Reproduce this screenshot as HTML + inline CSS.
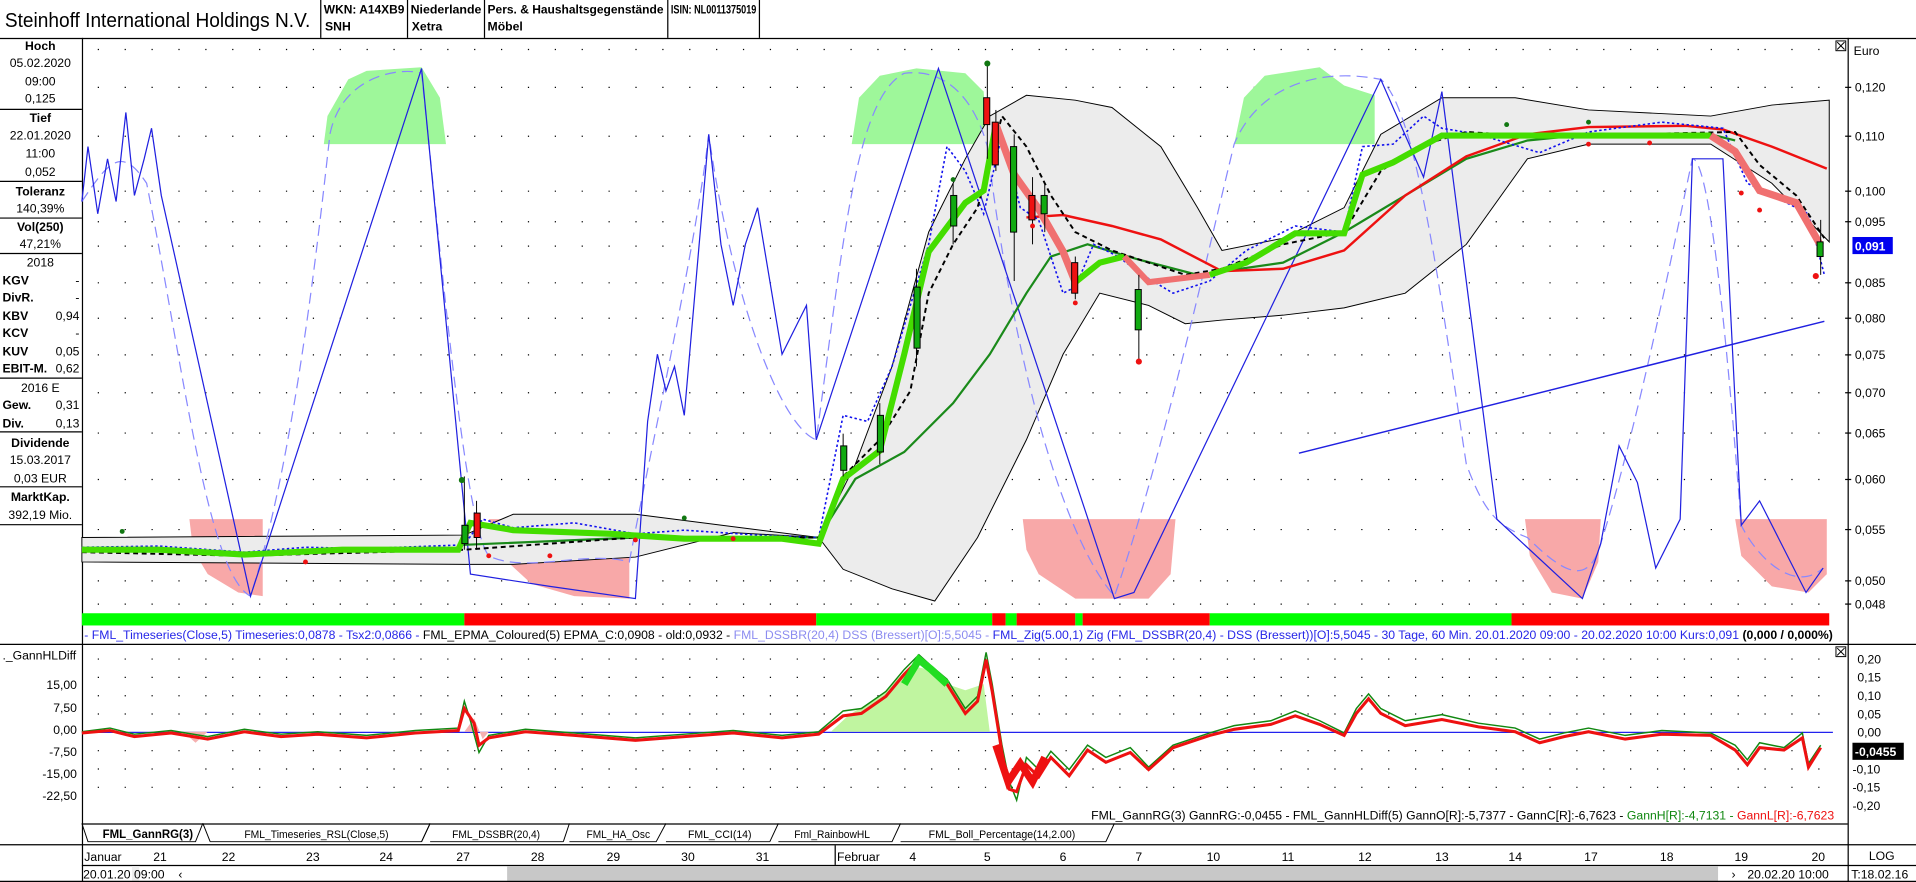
<!DOCTYPE html>
<html><head><meta charset="utf-8"><style>
html,body{margin:0;padding:0;background:#fff;overflow:hidden}
svg{display:block}
text{font-family:"Liberation Sans",Arial,sans-serif;font-size:10px;fill:#000}
.b{font-weight:bold}
.c{text-anchor:middle}
.r{text-anchor:end}
</style></head><body>
<svg width="1916" height="882" viewBox="0 0 1568 722" preserveAspectRatio="none" xmlns="http://www.w3.org/2000/svg">
<rect width="1568" height="722" fill="#fff"/>
<!-- header -->
<text x="4" y="22" style="font-size:16.5px" textLength="250" lengthAdjust="spacingAndGlyphs">Steinhoff International Holdings N.V.</text>
<g stroke="#000" stroke-width="1">
<line x1="262.5" y1="0" x2="262.5" y2="31"/><line x1="333.5" y1="0" x2="333.5" y2="31"/>
<line x1="396.5" y1="0" x2="396.5" y2="31"/><line x1="546.5" y1="0" x2="546.5" y2="31"/>
<line x1="621.5" y1="0" x2="621.5" y2="31"/>
<line x1="0" y1="31.5" x2="1568" y2="31.5"/>
<line x1="67.5" y1="31" x2="67.5" y2="722"/>
<line x1="1512.5" y1="31" x2="1512.5" y2="722"/>
</g>
<g class="b">
<text x="265" y="11" class="b" textLength="66" lengthAdjust="spacingAndGlyphs">WKN: A14XB9</text><text x="266" y="25" class="b">SNH</text>
<text x="336" y="11" class="b" textLength="58" lengthAdjust="spacingAndGlyphs">Niederlande</text><text x="337" y="25" class="b">Xetra</text>
<text x="399" y="11" class="b" textLength="144" lengthAdjust="spacingAndGlyphs">Pers. &amp; Haushaltsgegenstände</text><text x="399" y="25" class="b">Möbel</text>
<text x="549" y="11" class="b" textLength="70" lengthAdjust="spacingAndGlyphs">ISIN: NL0011375019</text>
</g>
<!-- sidebar -->
<g>
<text x="33" y="41" class="c b">Hoch</text><text x="33" y="55" class="c">05.02.2020</text><text x="33" y="70" class="c">09:00</text><text x="33" y="84" class="c">0,125</text>
<text x="33" y="100" class="c b">Tief</text><text x="33" y="114" class="c">22.01.2020</text><text x="33" y="129" class="c">11:00</text><text x="33" y="144" class="c">0,052</text>
<text x="33" y="160" class="c b">Toleranz</text><text x="33" y="174" class="c">140,39%</text>
<text x="33" y="189" class="c b">Vol(250)</text><text x="33" y="203" class="c">47,21%</text>
<text x="33" y="218" class="c">2018</text>
<text x="2" y="233" class="b">KGV</text><text x="65" y="233" class="r">-</text>
<text x="2" y="247" class="b">DivR.</text><text x="65" y="247" class="r">-</text>
<text x="2" y="262" class="b">KBV</text><text x="65" y="262" class="r">0,94</text>
<text x="2" y="276" class="b">KCV</text><text x="65" y="276" class="r">-</text>
<text x="2" y="291" class="b">KUV</text><text x="65" y="291" class="r">0,05</text>
<text x="2" y="305" class="b">EBIT-M.</text><text x="65" y="305" class="r">0,62</text>
<text x="33" y="321" class="c">2016 E</text>
<text x="2" y="335" class="b">Gew.</text><text x="65" y="335" class="r">0,31</text>
<text x="2" y="350" class="b">Div.</text><text x="65" y="350" class="r">0,13</text>
<text x="33" y="366" class="c b">Dividende</text><text x="33" y="380" class="c">15.03.2017</text><text x="33" y="395" class="c">0,03 EUR</text>
<text x="33" y="410" class="c b">MarktKap.</text><text x="33" y="425" class="c">392,19 Mio.</text>
<g stroke="#000"><line x1="0" y1="89.5" x2="67" y2="89.5"/><line x1="0" y1="148.5" x2="67" y2="148.5"/><line x1="0" y1="178.5" x2="67" y2="178.5"/><line x1="0" y1="207.5" x2="67" y2="207.5"/><line x1="0" y1="309.5" x2="67" y2="309.5"/><line x1="0" y1="353.5" x2="67" y2="353.5"/><line x1="0" y1="398.5" x2="67" y2="398.5"/><line x1="0" y1="429.5" x2="67" y2="429.5"/></g>
</g>
<!-- grid dots main -->
<g stroke="#000" stroke-width="1" stroke-dasharray="1 21">
<line x1="80" y1="40.5" x2="1500" y2="40.5"/><line x1="80" y1="71.5" x2="1500" y2="71.5"/><line x1="80" y1="111.5" x2="1500" y2="111.5"/>
<line x1="80" y1="156.5" x2="1500" y2="156.5"/><line x1="80" y1="181.5" x2="1500" y2="181.5"/><line x1="80" y1="201.5" x2="1500" y2="201.5"/>
<line x1="80" y1="231.5" x2="1500" y2="231.5"/><line x1="80" y1="260.5" x2="1500" y2="260.5"/><line x1="80" y1="290.5" x2="1500" y2="290.5"/>
<line x1="80" y1="321.5" x2="1500" y2="321.5"/><line x1="80" y1="354.5" x2="1500" y2="354.5"/><line x1="80" y1="392.5" x2="1500" y2="392.5"/>
<line x1="80" y1="433.5" x2="1500" y2="433.5"/><line x1="80" y1="475.5" x2="1500" y2="475.5"/><line x1="80" y1="494.5" x2="1500" y2="494.5"/>
<line x1="80" y1="539.5" x2="1500" y2="539.5"/><line x1="80" y1="554.5" x2="1500" y2="554.5"/><line x1="80" y1="569.5" x2="1500" y2="569.5"/>
<line x1="80" y1="584.5" x2="1500" y2="584.5"/><line x1="80" y1="614.5" x2="1500" y2="614.5"/><line x1="80" y1="629.5" x2="1500" y2="629.5"/><line x1="80" y1="644.5" x2="1500" y2="644.5"/>
</g>
<!-- green fills top -->
<g fill="#9ef79a">
<path d="M265,118 L268,95 L285,65 L300,58 L345,55 L360,80 L365,118Z"/>
<path d="M697,118 L703,80 L720,62 L750,56 L790,60 L805,75 L808,118Z"/>
<path d="M1010,118 L1018,80 L1035,62 L1080,55 L1100,70 L1125,78 L1125,118Z"/>
</g>
<!-- pink fills bottom -->
<g fill="#f8a8a8">
<path d="M155,425 L215,425 L215,488 L195,485 L170,470 L158,450Z"/>
<path d="M400,425 L515,425 L515,490 L470,488 L435,478 L410,455Z"/>
<path d="M837,425 L962,425 L958,470 L940,490 L880,490 L850,470 L840,450Z"/>
<path d="M1248,425 L1310,425 L1308,460 L1295,490 L1270,485 L1252,455Z"/>
<path d="M1420,425 L1495,425 L1495,470 L1480,485 L1450,480 L1425,455Z"/>
</g>
<!-- bollinger band -->
<path d="M67,440 L380,438 L420,421 L520,421 L670,440 L700,380 L730,300 L760,190 L790,130 L810,95 L840,78 L880,82 L910,88 L950,120 L980,170 L1000,205 L1050,195 L1100,170 L1130,110 L1180,80 L1240,80 L1300,90 L1400,95 L1450,86 L1497,82 L1497,198 L1450,150 L1400,118 L1300,118 L1250,130 L1200,200 L1150,240 L1100,252 L1050,258 L1000,262 L970,265 L940,250 L900,240 L870,290 L840,360 L800,440 L765,492 L730,482 L690,466 L670,440 L600,436 L520,456 L420,462 L380,462 L67,460Z" fill="#ececec" stroke="#000" stroke-width="0.8"/>
<!-- dashed light blue -->
<path d="M67,165 C90,130 100,120 120,150 C150,300 170,470 205,488 C240,380 260,200 270,110 C280,60 330,55 345,60 C360,200 380,430 400,455 C430,470 480,450 515,460 C530,380 570,200 580,110 C600,250 640,350 668,360 C690,200 700,80 740,60 C780,55 800,90 808,120 C830,300 870,440 912,488 C950,380 990,200 1010,118 C1030,70 1080,55 1130,65 C1160,90 1180,250 1200,380 C1215,420 1225,430 1250,440 C1280,470 1300,480 1310,445 C1340,350 1370,200 1385,130 C1400,130 1415,300 1425,430 C1440,460 1470,485 1492,465" fill="none" stroke="#8888ff" stroke-width="1" stroke-dasharray="9 5"/>
<!-- blue zigzag -->
<polyline points="67,165 72,120 80,175 88,130 95,165 103,92 110,160 118,130 124,105 132,160 205,488 345,56 385,470 450,480 520,490 530,345 538,290 545,320 552,300 560,340 580,110 590,200 600,250 610,200 620,170 640,290 660,250 668,360 768,56 912,490 928,485 1130,65 1165,145 1180,75 1225,425 1295,490 1310,445 1325,365 1340,395 1355,465 1375,425 1385,130 1395,130 1410,130 1425,430 1440,410 1478,485 1492,465" fill="none" stroke="#2020e0" stroke-width="1"/>
<line x1="1063" y1="371" x2="1493" y2="263" stroke="#2020e0" stroke-width="1.2"/>
<!-- green MA -->
<polyline points="380,446 520,440 670,440 700,392 740,370 780,330 810,290 840,240 860,210 890,200 930,212 980,225 1050,215 1100,190 1150,160 1200,130 1250,115 1300,110 1400,110 1420,115" fill="none" stroke="#1a8a1a" stroke-width="1.8"/>
<!-- red MA -->
<polyline points="840,178 870,176 910,185 950,196 1000,222 1050,220 1100,205 1150,160 1200,128 1250,110 1300,104 1380,103 1410,106 1450,120 1495,138" fill="none" stroke="#ee1111" stroke-width="2"/>
<!-- dotted blue -->
<polyline points="67,448 130,447 200,452 250,448 300,449 380,446 395,425 420,432 470,428 520,437 560,434 620,438 670,440 690,340 710,345 730,300 760,200 775,120 790,140 805,175 820,110 835,170 850,180 870,240 880,235 895,200 915,210 935,225 960,240 990,230 1020,205 1060,185 1100,190 1115,120 1140,118 1165,95 1180,105 1210,110 1260,125 1300,108 1360,100 1410,105 1430,150 1460,165 1480,175 1493,225" fill="none" stroke="#1010ee" stroke-width="1.3" stroke-dasharray="2 2"/>
<!-- black dashed -->
<polyline points="67,452 200,455 380,450 520,440 670,440 690,390 720,360 745,320 760,240 780,200 800,170 820,95 840,120 860,160 880,190 910,205 940,215 970,225 1000,220 1050,200 1100,190 1130,140 1160,120 1200,108 1260,112 1330,110 1420,108 1440,135 1470,160 1493,195" fill="none" stroke="#000" stroke-width="1.6" stroke-dasharray="4 3"/>
<!-- price band green/red -->
<polyline points="67,450 130,450 200,454 280,450 375,450 385,428 420,434 500,437 560,441 640,441 670,445 690,392 720,369 740,290 760,206 790,166 805,156 815,102" fill="none" stroke="#44dd00" stroke-width="5"/>
<polyline points="815,102 830,143 850,171 870,206 880,231" fill="none" stroke="#f07070" stroke-width="6"/>
<polyline points="880,231 900,215 920,210" fill="none" stroke="#44dd00" stroke-width="5"/>
<polyline points="920,210 940,231 990,225" fill="none" stroke="#f07070" stroke-width="5"/>
<polyline points="990,225 1020,215 1060,191 1100,191 1115,143 1140,133 1180,111 1240,111 1300,111 1400,111" fill="none" stroke="#44dd00" stroke-width="5"/>
<polyline points="1400,111 1420,124 1440,156 1470,166 1490,201" fill="none" stroke="#f07070" stroke-width="6"/>
<!-- candles -->
<g stroke="#000" stroke-width="0.8">
<line x1="808" y1="52" x2="808" y2="130"/><rect x="805" y="80" width="5" height="22" fill="#ee1111"/>
<line x1="815" y1="90" x2="815" y2="140"/><rect x="812" y="100" width="5" height="35" fill="#ee1111"/>
<line x1="830" y1="110" x2="830" y2="230"/><rect x="827" y="120" width="5" height="70" fill="#11aa11"/>
<line x1="845" y1="145" x2="845" y2="200"/><rect x="842" y="160" width="5" height="20" fill="#ee1111"/>
<line x1="855" y1="150" x2="855" y2="190"/><rect x="852" y="160" width="5" height="15" fill="#11aa11"/>
<line x1="880" y1="210" x2="880" y2="245"/><rect x="877" y="215" width="5" height="25" fill="#ee1111"/>
<line x1="932" y1="225" x2="932" y2="295"/><rect x="929" y="237" width="5" height="33" fill="#11aa11"/>
<line x1="1490" y1="180" x2="1490" y2="225"/><rect x="1487" y="198" width="5" height="12" fill="#11aa11"/>
<line x1="380" y1="390" x2="380" y2="450"/><rect x="378" y="430" width="5" height="15" fill="#11aa11"/>
<line x1="390" y1="410" x2="390" y2="450"/><rect x="388" y="420" width="5" height="20" fill="#ee1111"/>
<line x1="690" y1="355" x2="690" y2="390"/><rect x="688" y="365" width="5" height="20" fill="#11aa11"/>
<line x1="720" y1="330" x2="720" y2="380"/><rect x="718" y="340" width="5" height="30" fill="#11aa11"/>
<line x1="750" y1="220" x2="750" y2="300"/><rect x="748" y="235" width="5" height="50" fill="#11aa11"/>
<line x1="780" y1="150" x2="780" y2="200"/><rect x="778" y="160" width="5" height="25" fill="#11aa11"/>
</g>
<g fill="#ee1111"><circle cx="932" cy="296" r="2.5"/><circle cx="1486" cy="226" r="2.5"/><circle cx="845" cy="185" r="2"/><circle cx="880" cy="248" r="2"/><circle cx="1440" cy="172" r="2"/><circle cx="1425" cy="158" r="2"/><circle cx="1300" cy="118" r="2"/><circle cx="1350" cy="117" r="2"/><circle cx="400" cy="455" r="2"/><circle cx="450" cy="455" r="2"/><circle cx="520" cy="442" r="2"/><circle cx="600" cy="441" r="2"/><circle cx="250" cy="460" r="2"/></g>
<g fill="#117711"><circle cx="808" cy="52" r="2.5"/><circle cx="378" cy="393" r="2.5"/><circle cx="1233" cy="102" r="2"/><circle cx="1300" cy="100" r="2"/><circle cx="780" cy="147" r="2"/><circle cx="100" cy="435" r="2"/><circle cx="560" cy="424" r="2"/></g>
<!-- signal bar -->
<rect x="67" y="502" width="313" height="10" fill="#00ff00"/>
<rect x="380" y="502" width="288" height="10" fill="#ff0000"/>
<rect x="668" y="502" width="144" height="10" fill="#00ff00"/>
<rect x="812" y="502" width="11" height="10" fill="#ff0000"/>
<rect x="823" y="502" width="9" height="10" fill="#00ff00"/>
<rect x="832" y="502" width="48" height="10" fill="#ff0000"/>
<rect x="880" y="502" width="6" height="10" fill="#00ff00"/>
<rect x="886" y="502" width="104" height="10" fill="#ff0000"/>
<rect x="990" y="502" width="247" height="10" fill="#00ff00"/>
<rect x="1237" y="502" width="260" height="10" fill="#ff0000"/>
<!-- legend -->
<text x="69" y="523" textLength="1431" lengthAdjust="spacingAndGlyphs"><tspan fill="#2626e8">- FML_Timeseries(Close,5) Timeseries:0,0878 - Tsx2:0,0866 - </tspan><tspan>FML_EPMA_Coloured(5) EPMA_C:0,0908 - old:0,0932 - </tspan><tspan fill="#8c8cf0">FML_DSSBR(20,4) DSS (Bressert)[O]:5,5045 - </tspan><tspan fill="#2626e8">FML_Zig(5.00,1) Zig (FML_DSSBR(20,4) - DSS (Bressert))[O]:5,5045 - 30 Tage, 60 Min. 20.01.2020 09:00 - 20.02.2020 10:00 Kurs:0,091 </tspan><tspan class="b">(0,000 / 0,000%)</tspan></text>
<line x1="0" y1="527.5" x2="1568" y2="527.5" stroke="#000"/>
<!-- right axis main -->
<g>
<text x="1517" y="45">Euro</text>
<text x="1518" y="75">0,120</text><text x="1518" y="115">0,110</text><text x="1518" y="160">0,100</text><text x="1518" y="185">0,095</text>
<text x="1518" y="235">0,085</text><text x="1518" y="264">0,080</text><text x="1518" y="294">0,075</text><text x="1518" y="325">0,070</text>
<text x="1518" y="358">0,065</text><text x="1518" y="396">0,060</text><text x="1518" y="437">0,055</text><text x="1518" y="479">0,050</text><text x="1518" y="498">0,048</text>
</g>
<g stroke="#000"><line x1="1510" y1="71.5" x2="1515" y2="71.5"/><line x1="1510" y1="111.5" x2="1515" y2="111.5"/><line x1="1510" y1="156.5" x2="1515" y2="156.5"/><line x1="1510" y1="181.5" x2="1515" y2="181.5"/><line x1="1510" y1="231.5" x2="1515" y2="231.5"/><line x1="1510" y1="260.5" x2="1515" y2="260.5"/><line x1="1510" y1="290.5" x2="1515" y2="290.5"/><line x1="1510" y1="321.5" x2="1515" y2="321.5"/><line x1="1510" y1="354.5" x2="1515" y2="354.5"/><line x1="1510" y1="392.5" x2="1515" y2="392.5"/><line x1="1510" y1="433.5" x2="1515" y2="433.5"/><line x1="1510" y1="475.5" x2="1515" y2="475.5"/><line x1="1510" y1="494.5" x2="1515" y2="494.5"/></g>
<rect x="1516" y="194" width="33" height="14" fill="#0000ee"/>
<text x="1518" y="205" class="b" style="fill:#fff">0,091</text>
<!-- close buttons -->
<g fill="#fff" stroke="#000" stroke-width="0.8">
<rect x="1502.5" y="33.5" width="8" height="8"/><path d="M1503.5,34.5 L1509.5,40.5 M1509.5,34.5 L1503.5,40.5"/>
<rect x="1502.5" y="529.5" width="8" height="8"/><path d="M1503.5,530.5 L1509.5,536.5 M1509.5,530.5 L1503.5,536.5"/>
</g>
<!-- lower panel -->
<text x="2" y="540">._GannHLDiff</text>
<text x="63" y="564" class="r">15,00</text><text x="63" y="583" class="r">7,50</text><text x="63" y="601" class="r">0,00</text>
<text x="63" y="619" class="r">-7,50</text><text x="63" y="637" class="r">-15,00</text><text x="63" y="655" class="r">-22,50</text>
<text x="1520" y="543">0,20</text><text x="1520" y="558">0,15</text><text x="1520" y="573">0,10</text><text x="1520" y="588">0,05</text>
<text x="1520" y="603">0,00</text><text x="1516" y="618">-0,05</text><text x="1516" y="633">-0,10</text><text x="1516" y="648">-0,15</text><text x="1516" y="663">-0,20</text>
<rect x="1516" y="608" width="42" height="14" fill="#000"/>
<text x="1518" y="619" class="b" style="fill:#fff">-0,0455</text>
<line x1="67" y1="599.5" x2="1500" y2="599.5" stroke="#2222ee" stroke-width="1"/>
<path d="M680,599 L695,585 L720,570 L745,545 L760,548 L775,560 L790,565 L805,560 L810,599Z" fill="#c0f5a0"/>
<path d="M380,599 L388,588 L395,605 L400,599Z M150,599 L160,608 L170,599Z" fill="#f5b0b0"/>
<polyline points="67,599 90,596 110,601 140,598 170,603 200,597 230,601 260,599 300,602 340,598 375,596 380,574 385,590 392,616 400,602 430,597 470,600 520,604 560,601 600,598 640,602 670,599 690,582 705,580 725,566 740,548 752,536 762,545 775,556 790,580 800,570 807,534 812,560 820,610 826,640 832,655 840,620 850,630 860,615 875,630 890,610 905,620 925,612 940,628 960,610 990,600 1010,594 1040,590 1060,582 1080,590 1100,600 1110,580 1120,568 1130,580 1150,590 1180,585 1210,592 1240,596 1260,605 1280,600 1300,596 1330,602 1360,598 1400,600 1420,610 1430,622 1440,608 1460,612 1475,600 1480,625 1490,610" fill="none" stroke="#118811" stroke-width="1.2"/>
<polyline points="67,600 90,598 110,603 140,600 170,605 200,599 230,603 260,601 300,604 340,600 375,598 380,580 388,592 392,610 400,604 430,599 470,602 520,606 560,603 600,600 640,604 670,601 690,586 705,584 725,570 740,552 752,540 762,550 775,560 790,584 800,574 807,540 812,566 820,616 826,646 832,648 840,626 850,636 860,620 875,635 890,614 905,624 925,616 940,630 960,612 990,602 1010,597 1040,593 1060,586 1080,593 1100,602 1110,584 1120,572 1130,584 1150,594 1180,589 1210,595 1240,599 1260,608 1280,603 1300,599 1330,605 1360,601 1400,602 1420,614 1430,626 1440,612 1460,614 1475,604 1480,628 1490,612" fill="none" stroke="#ee1111" stroke-width="2.5"/>
<polyline points="740,560 752,540 762,548 775,560" fill="none" stroke="#22dd22" stroke-width="6"/>
<polyline points="815,610 825,640 835,625 845,640 855,620" fill="none" stroke="#ee1111" stroke-width="6"/>
<!-- bottom legend -->
<text x="893" y="671" textLength="608" lengthAdjust="spacingAndGlyphs"><tspan>FML_GannRG(3) GannRG:-0,0455 - FML_GannHLDiff(5) GannO[R]:-5,7377 - GannC[R]:-6,7623 - </tspan><tspan fill="#118811">GannH[R]:-4,7131 - </tspan><tspan fill="#ee1111">GannL[R]:-6,7623</tspan></text>
<line x1="67" y1="674.5" x2="1512" y2="674.5" stroke="#000"/>
<!-- tabs -->
<g fill="none" stroke="#000" stroke-width="0.8">
<path d="M67,674 L72,689 L160,689 L166,674"/>
<path d="M166,674 L172,689 M345,689 L352,674 M172,689 L345,689"/>
<path d="M345,689 L352,674 M461,689 L466,674 M352,689 L461,689"/>
<path d="M466,689 L537,689 L545,674 M630,689 L637,674 M545,689 L630,689"/>
<path d="M637,689 L730,689 L737,674 M737,689 L905,689 L912,674"/>
</g>
<text x="84" y="686" class="b" textLength="74" lengthAdjust="spacingAndGlyphs">FML_GannRG(3)</text>
<text x="200" y="686" style="font-size:9px" textLength="118" lengthAdjust="spacingAndGlyphs">FML_Timeseries_RSL(Close,5)</text>
<text x="370" y="686" style="font-size:9px" textLength="72" lengthAdjust="spacingAndGlyphs">FML_DSSBR(20,4)</text>
<text x="480" y="686" style="font-size:9px" textLength="52" lengthAdjust="spacingAndGlyphs">FML_HA_Osc</text>
<text x="563" y="686" style="font-size:9px" textLength="52" lengthAdjust="spacingAndGlyphs">FML_CCI(14)</text>
<text x="650" y="686" style="font-size:9px" textLength="62" lengthAdjust="spacingAndGlyphs">Fml_RainbowHL</text>
<text x="760" y="686" style="font-size:9px" textLength="120" lengthAdjust="spacingAndGlyphs">FML_Boll_Percentage(14,2.00)</text>
<line x1="0" y1="691.5" x2="1568" y2="691.5" stroke="#000"/>
<!-- time axis -->
<g>
<text x="69" y="705">Januar</text><text x="131" y="705" class="c">21</text><text x="187" y="705" class="c">22</text><text x="256" y="705" class="c">23</text><text x="316" y="705" class="c">24</text><text x="379" y="705" class="c">27</text><text x="440" y="705" class="c">28</text><text x="502" y="705" class="c">29</text><text x="563" y="705" class="c">30</text><text x="624" y="705" class="c">31</text>
<text x="685" y="705">Februar</text><text x="747" y="705" class="c">4</text><text x="808" y="705" class="c">5</text><text x="870" y="705" class="c">6</text><text x="932" y="705" class="c">7</text><text x="993" y="705" class="c">10</text><text x="1054" y="705" class="c">11</text><text x="1117" y="705" class="c">12</text><text x="1180" y="705" class="c">13</text><text x="1240" y="705" class="c">14</text><text x="1302" y="705" class="c">17</text><text x="1364" y="705" class="c">18</text><text x="1425" y="705" class="c">19</text><text x="1488" y="705" class="c">20</text>
<text x="1540" y="704" class="c">LOG</text>
</g>
<line x1="683.5" y1="692" x2="683.5" y2="708" stroke="#000"/>
<line x1="67" y1="708.5" x2="1568" y2="708.5" stroke="#000"/>
<rect x="108" y="709" width="6" height="12" fill="#eee"/>
<rect x="415" y="709" width="991" height="12" fill="#c8c8c8"/>
<text x="68" y="719">20.01.20 09:00</text><text x="146" y="719">‹</text>
<text x="1417" y="719">›</text><text x="1430" y="719">20.02.20 10:00</text>
<text x="1515" y="719">T:18.02.16</text>
<line x1="0" y1="721.5" x2="1568" y2="721.5" stroke="#000"/>
</svg>
</body></html>
